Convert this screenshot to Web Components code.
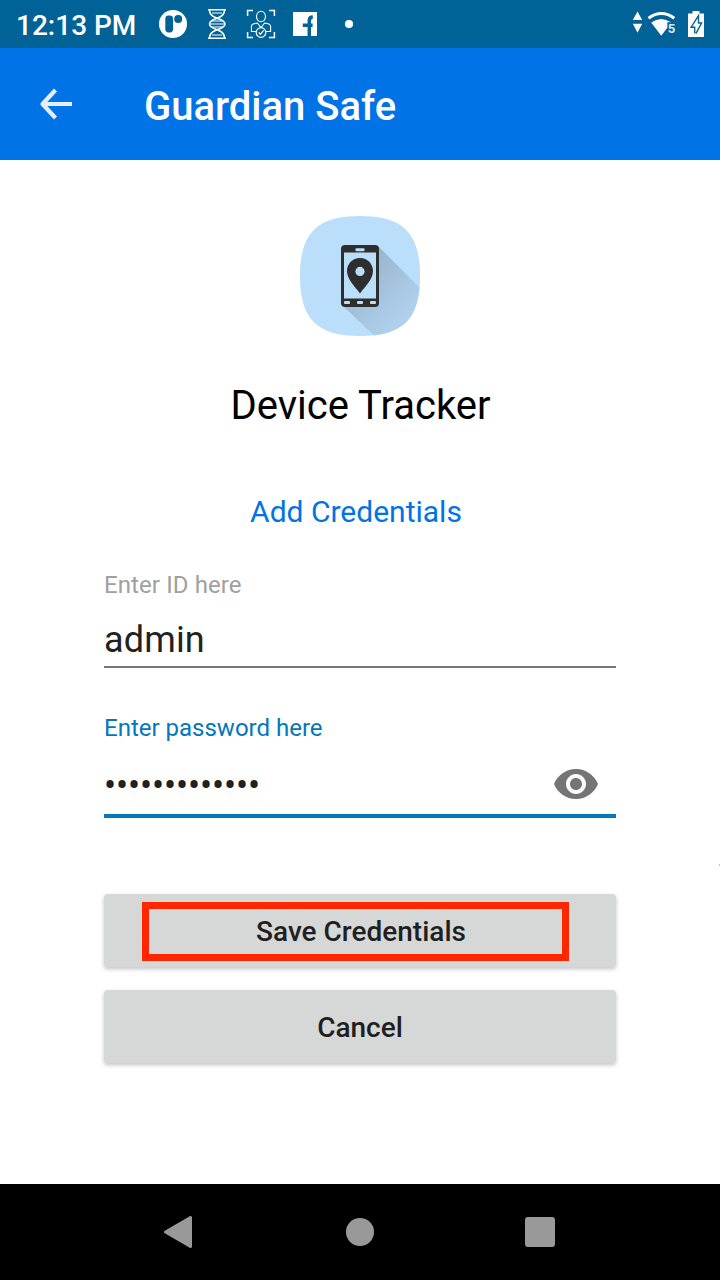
<!DOCTYPE html>
<html lang="en">
<head>
<meta charset="utf-8">
<title>Guardian Safe</title>
<style>
body{margin:0;background:#fff;font-family:Roboto,"Liberation Sans",sans-serif;color:#1f1f1f}
</style>
</head>
<body>
<guardian-screen></guardian-screen>
<script>
const define = (name, markup) => {
  const t = document.createElement('template');
  t.innerHTML = markup;
  customElements.define(name, class extends HTMLElement {
    constructor() {
      super();
      this.attachShadow({ mode: 'open' }).append(t.content.cloneNode(true));
    }
  });
};

define('status-bar', `
<style>
:host{display:flex;height:48px;background:#006296;color:#fff;box-sizing:border-box;padding-left:16px;align-items:center}
.time{font-weight:500;font-size:28px;line-height:48px;width:143px;white-space:nowrap;padding-top:2px;box-sizing:border-box;height:48px}
svg{display:block;flex:none}
.right{margin-left:auto}
</style>
<span class="time">12:13 PM</span>
<svg width="210" height="48" viewBox="159 0 210 48">
  <circle cx="173" cy="24" r="14" fill="#fff"/>
  <g fill="#006296"><rect x="165.3" y="15.500" width="7.800" height="17" rx="3.4"/><circle cx="178.200" cy="19" r="4"/></g>
  <g fill="none" stroke="#fff" stroke-width="1.5">
    <path d="M208 9.7h18M208 38.300h18M209.500 10C209.500 20 225 17.500 225 24S209.500 28 209.500 38M224.500 10C224.500 20 209.500 17.500 209.500 24S224.500 28 224.500 38"/>
    <path d="M212 13h10M211 21h12M210 24h14M211 27h12M212 35h10" stroke-width="1.200"/>
    <path d="M247.600 16v-5.400h5.400M269 10.600h5.400V16M247.600 32v5.400h5.400M269 37.400h5.400V32"/>
    <ellipse cx="261" cy="16.500" rx="4.500" ry="5.300" stroke-width="1.100"/>
    <path d="M256 31.500h-4.600v-5.300q0-2.400 6-3.200l3.600 4.500 3.600-4.500q6 .8 6 3.200v5.300H266" stroke-width="1.100"/>
    <circle cx="261" cy="32.500" r="4.800" stroke-width="1.200"/>
    <path d="M258.700 32.400l1.700 1.900 3.200-3.900" stroke-width="1.200"/>
  </g>
  <path fill="#fff" d="M293 12h24v24h-24z"/>
  <path d="M309.300 36V20.500q0-3.500 3.500-3.500M302.800 25.200h9.800" fill="none" stroke="#006296" stroke-width="3.500"/>
  <circle cx="349" cy="24" r="4.100" fill="#fff"/>
</svg>
<svg class="right" width="90" height="48" viewBox="630 0 90 48">
  <path fill="#fff" d="M637.500 11.500l4.700 8.500h-9.400zM637.500 32.700l4.700-8.900h-9.400z"/>
  <path d="M648.500 18.300Q661.300 8.800 674.300 18.300" fill="none" stroke="#fff" stroke-width="3"/>
  <path fill="#fff" d="M651.200 22.500Q661.200 15.500 671.300 22.500L661.200 35.700z"/>
  <path d="M667.300 22.300h9v12h-8.700z" fill="#006296"/>
  <text x="667.800" y="33" font-family="Roboto,sans-serif" font-size="13.200" font-weight="700" fill="#d8e8f1">5</text>
  <path fill="#fff" d="M692.500 11h7v2.500h4.500V37h-16V13.500h4.500z"/>
  <path d="M697.800 18l-5.400 8.500h3v6.500l5-9.300h-2.600z" fill="#fff" stroke="#006296" stroke-width="2.800" paint-order="stroke"/>
</svg>`);

define('app-bar', `
<style>
:host{display:flex;align-items:center;height:112px;background:#0073e6;color:#fff}
svg{display:block;margin-left:38px;width:36px;height:112px}
h1{margin:6px 0 0 70px;font-size:40px;font-weight:500;line-height:48px;white-space:nowrap}
</style>
<svg viewBox="0 0 36 112"><path d="M34 56H5M17.500 42L4.500 56 17.500 70" fill="none" stroke="#e4effc" stroke-width="4.200" stroke-linejoin="round"/></svg>
<h1><slot></slot></h1>`);

define('tracker-logo', `
<style>:host{display:block;width:120px;height:120px}svg{display:block}</style>
<svg width="120" height="120" viewBox="0 0 120 120">
  <defs>
    <linearGradient id="s" gradientUnits="userSpaceOnUse" x1="60" y1="55" x2="105" y2="100"><stop stop-color="#99b6cf"/><stop offset="1" stop-color="#afd0ec"/></linearGradient>
    <clipPath id="c"><path d="M60 0C103 0 120 17 120 60S103 120 60 120 0 103 0 60 17 0 60 0z"/></clipPath>
  </defs>
  <g clip-path="url(#c)">
    <path fill="#bbdefb" d="M0 0h120v120H0z"/>
    <path fill="url(#s)" d="M78 30l60 60v60h-32L42 89z"/>
  </g>
  <rect x="41" y="29" width="38" height="62" rx="4" fill="#2e2e2e"/>
  <path fill="#bbdefb" d="M44 36.500h32v46H44z"/>
  <g fill="#bbdefb"><rect x="55.500" y="32.300" width="9" height="3" rx="1"/><rect x="44" y="85" width="6" height="3" rx="1"/><rect x="57" y="85" width="6" height="3" rx="1"/><rect x="70" y="85" width="6" height="3" rx="1"/></g>
  <path fill="#2e2e2e" fill-rule="evenodd" d="M60 42c-7.500 0-13 5.800-13 13 0 8.500 8 15.500 13 22.500 5-7 13-14 13-22.500 0-7.200-5.500-13-13-13zm0 8.800a4.600 4.600 0 1 0 0 9.200 4.600 4.600 0 0 0 0-9.200z"/>
</svg>`);

define('text-field', `
<style>
:host{display:block;height:99px;box-sizing:border-box;border-bottom:2px solid #757575;color:#212121}
:host([active]){height:106px;border-bottom:4px solid #0277bd}
.label{padding-top:2px;font-size:24px;line-height:28px;color:#a0a0a0;letter-spacing:.1px;white-space:nowrap}
:host([active]) .label{color:#0277bd;letter-spacing:0}
.row{display:flex;height:70px;box-sizing:border-box;align-items:center;justify-content:space-between;font-size:36px;letter-spacing:.15px;padding-top:12px}
:host([active]) .row{padding-top:14px;letter-spacing:-.15px}
:host([active]) .value{padding-top:3px}
</style>
<div class="label"><slot name="label"></slot></div>
<div class="row"><span class="value"><slot></slot></span><slot name="action"></slot></div>`);

define('eye-icon', `
<style>:host{display:block;width:44px;height:30px;margin-right:18px}svg{display:block}</style>
<svg width="44" height="30" viewBox="1 4.500 22 15"><path fill="#757575" d="M12 4.500C7 4.500 2.730 7.610 1 12c1.730 4.390 6 7.500 11 7.500s9.270-3.110 11-7.500c-1.730-4.390-6-7.500-11-7.500zM12 17c-2.760 0-5-2.240-5-5s2.240-5 5-5 5 2.240 5 5-2.240 5-5 5zm0-8c-1.660 0-3 1.340-3 3s1.340 3 3 3 3-1.340 3-3-1.340-3-3-3z"/></svg>`);

define('raised-button', `
<style>
:host{display:block;position:relative;height:73px}
button{display:block;width:100%;height:73px;padding:2px 0 0;border:0;border-radius:4px;background:#d6d8d7;box-shadow:0 2px 4px rgba(0,0,0,.24);font:500 28px Roboto,sans-serif;color:#1f1f1f}
:host([marked]) button{padding-left:2px}
.mark{display:none;position:absolute;left:38px;top:8px;width:427px;height:59px;box-sizing:border-box;border:7px solid #ff2600}
:host([marked]) .mark{display:block}
</style>
<button><slot></slot></button><div class="mark"></div>`);

define('nav-bar', `
<style>:host{display:flex;height:96px;background:#000;justify-content:space-around;align-items:center;padding:0 90px}svg{display:block}</style>
<svg width="34" height="36" viewBox="0 0 34 36"><path d="M2.500 18L27.500 3.500V32.500z" fill="#999" stroke="#999" stroke-width="3" stroke-linejoin="round"/></svg>
<svg width="34" height="36" viewBox="0 0 34 36"><circle cx="17" cy="18" r="14" fill="#999"/></svg>
<svg width="34" height="36" viewBox="0 0 34 36"><rect x="2" y="3" width="30" height="30" rx="3" fill="#999"/></svg>`);

define('guardian-screen', `
<style>
:host{display:flex;flex-direction:column;width:720px;height:1280px;background:#fff;overflow:hidden;position:relative}
main{flex:1;display:flex;flex-direction:column;align-items:center;padding-top:56px}
h2{margin:46px 0 0 1px;font-size:40px;font-weight:400;line-height:48px;color:#000;white-space:nowrap}
h3{margin:64px 8px 0 0;font-size:30px;font-weight:400;line-height:36px;color:#0073e6;white-space:nowrap}
.form{width:512px;margin-top:39px}
.second{margin-top:44px}
.buttons{display:grid;gap:23px;margin-top:76px}
.edge{position:absolute;right:0;top:864px;width:1px;height:2px;background:#40ffe5}
</style>
<status-bar></status-bar>
<app-bar>Guardian Safe</app-bar>
<main>
  <tracker-logo></tracker-logo>
  <h2>Device Tracker</h2>
  <h3>Add Credentials</h3>
  <div class="form">
    <text-field><span slot="label">Enter ID here</span>admin</text-field>
    <text-field class="second" active><span slot="label">Enter password here</span>•••••••••••••<eye-icon slot="action"></eye-icon></text-field>
    <div class="buttons">
      <raised-button marked>Save Credentials</raised-button>
      <raised-button>Cancel</raised-button>
    </div>
  </div>
</main>
<nav-bar></nav-bar>
<div class="edge"></div>`);
</script>
</body>
</html>
